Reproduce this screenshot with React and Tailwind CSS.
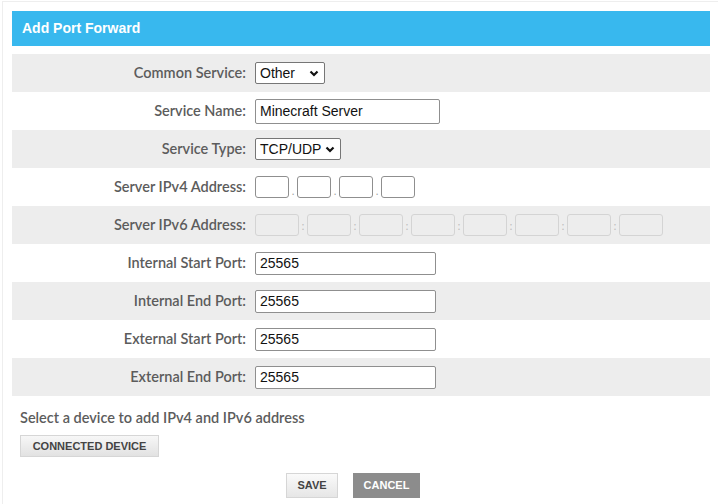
import React from 'react';

const label = "w-[243px] shrink-0 pr-[9px] text-right text-[14.5px] font-semibold text-[#5c5c5c]";
const font = { fontFamily: 'Lato, "Liberation Sans", sans-serif' };

const Row = ({ title, gray, children }) => (
  <div className={`flex items-center h-[38px] ${gray ? 'bg-[#ededed]' : 'bg-white'}`}>
    <div className={label} style={font}>{title}</div>
    {children}
  </div>
);

const Select = ({ value, width }) => (
  <div
    className={`flex items-center justify-between h-[22px] ${width} border border-[#767676] rounded-[2px] bg-white pl-[4px] pr-[5px] text-[14px] text-[#111] font-['Liberation_Sans',sans-serif]`}
  >
    <span>{value}</span>
    <svg width="10" height="7" viewBox="0 0 10 7">
      <path d="M1.5 1.5 L5 5 L8.5 1.5" fill="none" stroke="#111" strokeWidth="2.2" />
    </svg>
  </div>
);

const TextBox = ({ value, width, h = 'h-[23px]' }) => (
  <div
    className={`flex items-center ${h} ${width} border border-[#8f8f8f] rounded-[2px] bg-white px-[4px] text-[14px] text-[#111] font-['Liberation_Sans',sans-serif]`}
  >
    {value}
  </div>
);

export default function App() {
  return (
    <div className="w-[720px] h-[504px] bg-white overflow-hidden">
      <div className="ml-[2px] mt-[1px] w-[716px] h-[503px] border-l border-t border-[#eeeeee] pl-[9px] pt-[9px]">
        <div className="w-[698px]">
          <div className="h-[35px] bg-[#38b8ee] flex items-center pl-[10px] text-white text-[14px] font-bold font-['Liberation_Sans',sans-serif]">
            Add Port Forward
          </div>
          <div className="mt-[8px]">
            <Row title="Common Service:" gray>
              <Select value="Other" width="w-[70px]" />
            </Row>
            <Row title="Service Name:">
              <TextBox value="Minecraft Server" width="w-[185px]" h="h-[25px]" />
            </Row>
            <Row title="Service Type:" gray>
              <Select value="TCP/UDP" width="w-[86px]" />
            </Row>
            <Row title="Server IPv4 Address:">
              <div className="flex items-center">
                {[0, 1, 2, 3].map((i) => (
                  <React.Fragment key={i}>
                    {i > 0 && <span className="w-[8px] text-center text-[10px] text-[#999] leading-none pt-[8px]">.</span>}
                    <div className="w-[34px] h-[22px] border border-[#8f8f8f] rounded-[3px] bg-white" />
                  </React.Fragment>
                ))}
              </div>
            </Row>
            <Row title="Server IPv6 Address:" gray>
              <div className="flex items-center">
                {[0, 1, 2, 3, 4, 5, 6, 7].map((i) => (
                  <React.Fragment key={i}>
                    {i > 0 && <span className="w-[8px] text-center text-[11px] text-[#bbb] leading-none">:</span>}
                    <div className="w-[44px] h-[22px] border border-[#d4d4d4] rounded-[3px] bg-[#ededed]" />
                  </React.Fragment>
                ))}
              </div>
            </Row>
            <Row title="Internal Start Port:">
              <TextBox value="25565" width="w-[181px]" />
            </Row>
            <Row title="Internal End Port:" gray>
              <TextBox value="25565" width="w-[181px]" />
            </Row>
            <Row title="External Start Port:">
              <TextBox value="25565" width="w-[181px]" />
            </Row>
            <Row title="External End Port:" gray>
              <TextBox value="25565" width="w-[181px]" />
            </Row>
          </div>
          <div className="pl-[8px] pt-[11px] text-[14.5px] font-semibold text-[#5c5c5c]" style={font}>
            Select a device to add IPv4 and IPv6 address
          </div>
          <div className="pl-[8px] pt-[3px]">
            <button className="h-[22px] w-[139px] bg-gradient-to-b from-[#f7f7f7] to-[#e2e2e2] border border-[#d6d6d6] text-[11px] font-bold text-[#444] font-['Liberation_Sans',sans-serif]">
              CONNECTED DEVICE
            </button>
          </div>
          <div className="flex justify-center gap-[15px] pt-[16px] pr-[16px]">
            <button className="h-[25px] w-[52px] bg-gradient-to-b from-[#fafafa] to-[#e6e6e6] border border-[#d6d6d6] text-[11px] font-bold text-[#444] font-['Liberation_Sans',sans-serif]">
              SAVE
            </button>
            <button className="h-[25px] w-[67px] bg-[#8c8c8c] text-[11px] font-bold text-white font-['Liberation_Sans',sans-serif]">
              CANCEL
            </button>
          </div>
        </div>
      </div>
    </div>
  );
}
